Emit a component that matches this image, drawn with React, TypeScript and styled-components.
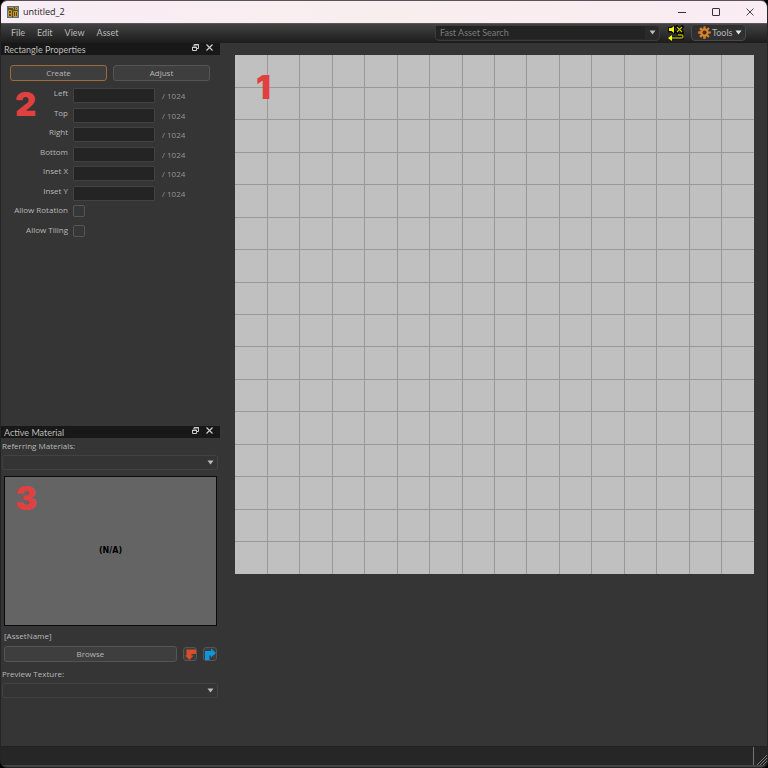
import React from "react";
import styled, { createGlobalStyle } from "styled-components";

const Global = createGlobalStyle`
  * { box-sizing: border-box; }
  html, body { margin: 0; background: #000; }
  body { font: 9px/12px "Lato", "Liberation Sans", sans-serif; color: #b8b8b8; }
  button, input, select { font: inherit; color: inherit; margin: 0; }
  button { cursor: pointer; }
`;

const Window = styled.div`
  display: flex;
  flex-direction: column;
  min-height: 100vh;
  background: #353535;
  border: 1px solid #242424;
  border-top-color: #5a5258;
  border-radius: 7px;
  overflow: hidden;
`;

const TitleBar = styled.header`
  display: flex;
  align-items: center;
  height: 22px;
  padding-left: 6px;
  background: linear-gradient(90deg, #f9edf6, #f9eeee 50%, #faecf3);
  color: #222;
  font-family: "Open Sans", "Noto Sans", sans-serif;
`;

const WindowTitle = styled.h1`
  flex: 1;
  margin: 0 0 0 4px;
  font-size: 9px;
  font-weight: 400;
`;

const CaptionButton = styled.button`
  display: grid;
  place-items: center;
  width: 34px;
  height: 22px;
  padding: 0;
  border: 0;
  background: none;
  color: #333;
`;

const MenuBar = styled.div`
  display: flex;
  align-items: center;
  height: 20px;
  padding: 0 21px 2px 4px;
  border-top: 1px solid #5b575a;
  background: linear-gradient(#424242, #1c1c1c);
`;

const Menus = styled.nav`
  display: flex;
  flex: 1;
`;

const MenuButton = styled.button`
  padding: 0 6px;
  border: 0;
  background: none;
`;

const SearchBox = styled.div`
  display: flex;
  align-items: center;
  width: 225px;
  height: 16px;
  border: 1px solid #3c3c3c;
  border-radius: 4px;
  background: #292929;
`;

const SearchInput = styled.input`
  flex: 1;
  min-width: 0;
  height: 13px;
  padding: 0 4px;
  border: 0;
  outline: 0;
  background: #232323;
  &::placeholder { color: #7c7c7c; opacity: 1; }
`;

const IconButton = styled.button<{ $framed?: boolean }>`
  display: grid;
  flex: none;
  place-items: center;
  width: 14px;
  height: 14px;
  padding: 0;
  border: 1px solid ${(p) => (p.$framed ? "#555" : "transparent")};
  border-radius: 3px;
  background: ${(p) => (p.$framed ? "#3c3c3c" : "none")};
`;

const SoundButton = styled(IconButton)`
  width: 18px;
  height: 18px;
  margin: 0 6px 0 7px;
`;

const ToolsButton = styled.button`
  display: flex;
  align-items: center;
  gap: 1px;
  width: 55px;
  height: 17px;
  padding: 0 3px 0 6px;
  border: 1px solid #484848;
  border-radius: 4px;
  background: #303030;
  & > span { flex: 1; text-align: left; }
`;

const Workspace = styled.div`
  display: flex;
  flex: 1;
`;

const Docks = styled.aside`
  display: flex;
  flex-direction: column;
  flex: none;
  width: 219px;
  font: 8px/12px "Open Sans", "Noto Sans", sans-serif;
`;

const Dock = styled.section<{ $grow?: boolean }>`
  flex: ${(p) => (p.$grow ? "1 0 auto" : "none")};
`;

const DockHeader = styled.div`
  display: flex;
  align-items: flex-end;
  height: 12px;
  padding: 0 4px 0 3px;
  background: #181818;
`;

const DockTitle = styled.h2`
  flex: 1;
  margin: 0;
  color: #bcbcbc;
  font: 400 9px/11px "Lato", "Liberation Sans", sans-serif;
`;

const DockButton = styled(IconButton)`
  height: 12px;
  color: #ccc;
  padding-bottom: 3px;
`;

const ModeButtons = styled.div`
  display: flex;
  gap: 6px;
  padding: 10px 10px 0 9px;
`;

const PushButton = styled.button<{ $active?: boolean }>`
  flex: 1;
  height: 16px;
  padding: 0;
  border: 1px solid ${(p) => (p.$active ? "#a06a38" : "#555")};
  border-radius: 3px;
  background: #3e3e3e;
`;

const FieldArea = styled.div`
  position: relative;
  padding-top: 5px;
`;

const Fields = styled.div`
  display: grid;
  grid-template-rows: repeat(8, 1fr);
  height: 156px;
`;

const Field = styled.div`
  display: grid;
  grid-template-columns: 67px 82px 1fr;
  column-gap: 5px;
  height: 19px;
  & > label { text-align: right; line-height: 14px; }
  & > span { padding: 3px 0 0 2px; color: #949494; line-height: 14px; }
`;

const NumberInput = styled.input`
  width: 100%;
  height: 15px;
  margin-top: 2px;
  padding: 0 3px;
  border: 1px solid #424242;
  border-radius: 1px;
  outline: 0;
  background: #242424;
`;

const CheckBox = styled.input`
  appearance: none;
  width: 12px;
  height: 12px;
  margin-top: 2px;
  border: 1px solid #555;
  border-radius: 2px;
  background: #363636;
  &:checked { background: #a06a38; }
`;

const Callout = styled.span<{ $x: number; $y: number }>`
  position: absolute;
  left: ${(p) => p.$x}px;
  top: ${(p) => p.$y}px;
  color: #e04040;
  font: 900 33px/24px "Inter", "Liberation Sans", sans-serif;
  pointer-events: none;
`;

const MaterialBody = styled.div`
  display: flex;
  flex-direction: column;
  padding: 2px 2px 48px 1px;
`;

const SelectFrame = styled.div`
  display: grid;
  align-items: center;
  margin-top: 3px;
  & > * { grid-area: 1 / 1; }
  & > svg { justify-self: end; margin-right: 4px; pointer-events: none; }
`;

const SelectBox = styled.select`
  appearance: none;
  width: 100%;
  height: 15px;
  padding: 0 14px 0 4px;
  border: 1px solid #424242;
  border-radius: 3px;
  background: #343434;
`;

const Preview = styled.div`
  position: relative;
  display: grid;
  place-items: center;
  height: 150px;
  margin: 6px 1px 4px 2px;
  border: 1px solid #0a0a0a;
  background: #646464;
  color: #000;
  font: bold 8px/12px "DejaVu Sans", sans-serif;
`;

const AssetName = styled.div`
  padding-left: 2px;
`;

const BrowseRow = styled.div`
  display: flex;
  align-items: center;
  gap: 6px;
  margin: 4px 1px 6px 2px;
`;

const CanvasArea = styled.main`
  flex: 1;
  min-width: 0;
  padding: 12px 13px 12px 15px;
`;

const Sheet = styled.div`
  position: relative;
  aspect-ratio: 1;
  background: #c0c0c0;
  & > svg { display: block; width: 100%; height: 100%; }
`;

const StatusBar = styled.footer`
  display: flex;
  justify-content: flex-end;
  height: 21px;
  border-top: 1px solid #222;
  border-bottom: 2px solid #444;
  background: #262626;
`;

const Grip = styled.div`
  display: flex;
  align-items: flex-end;
  justify-content: flex-end;
  width: 14px;
  border-left: 1px solid #757575;
`;

const Arrow = ({ color = "#bbb" }: { color?: string }) => (
  <svg width="7" height="5" viewBox="0 0 7 5" aria-hidden="true">
    <path d="M0.5 0.5h6L3.5 4.5z" fill={color} />
  </svg>
);

const AppIcon = () => (
  <svg width="12" height="12" viewBox="0 0 12 12" aria-hidden="true">
    <path fill="#4a7790" d="M0 0h12v12H0z" />
    <path fill="#5a4a26" d="M1 1h10v10H1z" />
    <path d="M1.500 10.500V4.500H4.500V10.500zM1.500 1.500H6.500V3.500M6.500 10.500V5.500H10.500V10.500zM8.500 1.500H10.500V3.500H8.500zM1.500 7.500H4M8.500 6V10" fill="none" stroke="#c4962c" />
  </svg>
);

const SoundIcon = () => (
  <svg width="16" height="16" viewBox="0 0 16 16" aria-hidden="true">
    <path d="M0 2h3L7 0v9L3 7.500H0z" fill="#0a0a0a" />
    <path d="M1 3h2.500L6 1v7L3.500 6H1z" fill="#f4f400" />
    <path d="M9 2l5 5M14 2L9 7" stroke="#050505" strokeWidth="3.500" strokeLinecap="square" />
    <path d="M9 2l5 5M14 2L9 7" stroke="#c6c600" strokeWidth="1.200" />
    <path d="M10 10h4.500v3H4" fill="none" stroke="#0a0a0a" strokeWidth="3" />
    <path d="M10 10h3.500q1.500 0 1.500 1.500T13.500 13H4" fill="none" stroke="#a4a400" strokeWidth="1.400" />
    <path d="M0 13l4-3v6z" fill="#ffff00" />
  </svg>
);

const GearIcon = () => (
  <svg width="13" height="13" viewBox="-6.5 -6.5 13 13" aria-hidden="true">
    {[0, 45, 90, 135].map((a) => (
      <path key={a} d="M-1 -6.300h2l.3 12.600h-2.600z" fill="#dc812a" transform={`rotate(${a})`} />
    ))}
    <circle r="4.200" fill="#dc812a" />
    <circle r="2" fill="#303030" />
  </svg>
);

const FloatIcon = () => (
  <svg width="7" height="7" viewBox="0 0 7 7" fill="none" stroke="currentColor" aria-hidden="true">
    <path d="M2 2V.5h4.500V4.500H5M2 1h4.500M.5 3h4v3.500h-4zM.5 3.500h4" />
  </svg>
);

const CrossIcon = ({ size = 7 }: { size?: number }) => (
  <svg width={size} height={size} viewBox="0 0 7 7" stroke="currentColor" aria-hidden="true">
    <path d="M.5 .5l6 6M6.500 .5l-6 6" strokeWidth={size > 7 ? 0.8 : 1.2} />
  </svg>
);

const fields = ["Left", "Top", "Right", "Bottom", "Inset X", "Inset Y"];
const toggles = ["Allow Rotation", "Allow Tiling"];
const gridLines = Array.from({ length: 15 }, (_, i) => `${((i + 1) * 100) / 16}%`);

function DockBar({ title }: { title: string }) {
  return (
    <DockHeader>
      <DockTitle>{title}</DockTitle>
      <DockButton aria-label={`Float ${title}`}><FloatIcon /></DockButton>
      <DockButton aria-label={`Close ${title}`}><CrossIcon /></DockButton>
    </DockHeader>
  );
}

export default function App() {
  return (
    <>
      <Global />
      <Window>
        <TitleBar>
          <AppIcon />
          <WindowTitle>untitled_2</WindowTitle>
          <CaptionButton aria-label="Minimize">
            <svg width="8" height="8" stroke="currentColor"><path d="M0 4.500h8" /></svg>
          </CaptionButton>
          <CaptionButton aria-label="Maximize">
            <svg width="8" height="8" fill="none" stroke="currentColor"><rect x=".5" y=".5" width="7" height="7" rx=".5" /></svg>
          </CaptionButton>
          <CaptionButton aria-label="Close"><CrossIcon size={8} /></CaptionButton>
        </TitleBar>
        <MenuBar>
          <Menus>
            {["File", "Edit", "View", "Asset"].map((m) => <MenuButton key={m}>{m}</MenuButton>)}
          </Menus>
          <SearchBox>
            <SearchInput aria-label="Fast Asset Search" placeholder="Fast Asset Search" />
            <IconButton aria-label="Search history"><Arrow /></IconButton>
          </SearchBox>
          <SoundButton aria-label="Mute"><SoundIcon /></SoundButton>
          <ToolsButton><GearIcon /><span>Tools</span><Arrow color="#ddeef2" /></ToolsButton>
        </MenuBar>
        <Workspace>
          <Docks>
            <Dock $grow>
              <DockBar title="Rectangle Properties" />
              <ModeButtons>
                <PushButton $active>Create</PushButton>
                <PushButton>Adjust</PushButton>
              </ModeButtons>
              <FieldArea>
                <Fields>
                  {fields.map((f) => (
                    <Field key={f}>
                      <label htmlFor={f}>{f}</label>
                      <NumberInput id={f} />
                      <span>/ 1024</span>
                    </Field>
                  ))}
                  {toggles.map((t) => (
                    <Field key={t}>
                      <label htmlFor={t}>{t}</label>
                      <CheckBox id={t} type="checkbox" />
                    </Field>
                  ))}
                </Fields>
                <Callout $x={14} $y={11}>2</Callout>
              </FieldArea>
            </Dock>
            <Dock>
              <DockBar title="Active Material" />
              <MaterialBody>
                <label htmlFor="materials">Referring Materials:</label>
                <SelectFrame>
                  <SelectBox id="materials" />
                  <Arrow />
                </SelectFrame>
                <Preview>
                  (N/A)
                  <Callout $x={10} $y={9}>3</Callout>
                </Preview>
                <AssetName>[AssetName]</AssetName>
                <BrowseRow>
                  <PushButton>Browse</PushButton>
                  <IconButton $framed aria-label="Use selected asset">
                    <svg width="12" height="12" viewBox="0 0 12 12"><path fill="#d94d2b" d="M2.500 1.500H12V6H7.500V7.500H9.500L5.500 12 1 7.500H2.500z" /></svg>
                  </IconButton>
                  <IconButton $framed aria-label="Show in browser">
                    <svg width="12" height="12" viewBox="0 0 12 12"><path fill="#0d96dd" d="M1 3h6V.5L12 5 7 9.500V7.500H5.500V12H1z" /></svg>
                  </IconButton>
                </BrowseRow>
                <label htmlFor="texture">Preview Texture:</label>
                <SelectFrame>
                  <SelectBox id="texture" />
                  <Arrow />
                </SelectFrame>
              </MaterialBody>
            </Dock>
          </Docks>
          <CanvasArea>
            <Sheet>
              <svg shapeRendering="crispEdges" stroke="#989898" role="img" aria-label="Texture grid">
                {gridLines.map((p) => (
                  <React.Fragment key={p}>
                    <line x1={p} x2={p} y1="0" y2="100%" />
                    <line x1="0" x2="100%" y1={p} y2={p} />
                  </React.Fragment>
                ))}
              </svg>
              <Callout $x={21} $y={20}>1</Callout>
            </Sheet>
          </CanvasArea>
        </Workspace>
        <StatusBar>
          <Grip>
            <svg width="11" height="11" stroke="#777" aria-hidden="true">
              <path d="M1 11L11 1M4 11l7-7M7 11l4-4" />
            </svg>
          </Grip>
        </StatusBar>
      </Window>
    </>
  );
}
